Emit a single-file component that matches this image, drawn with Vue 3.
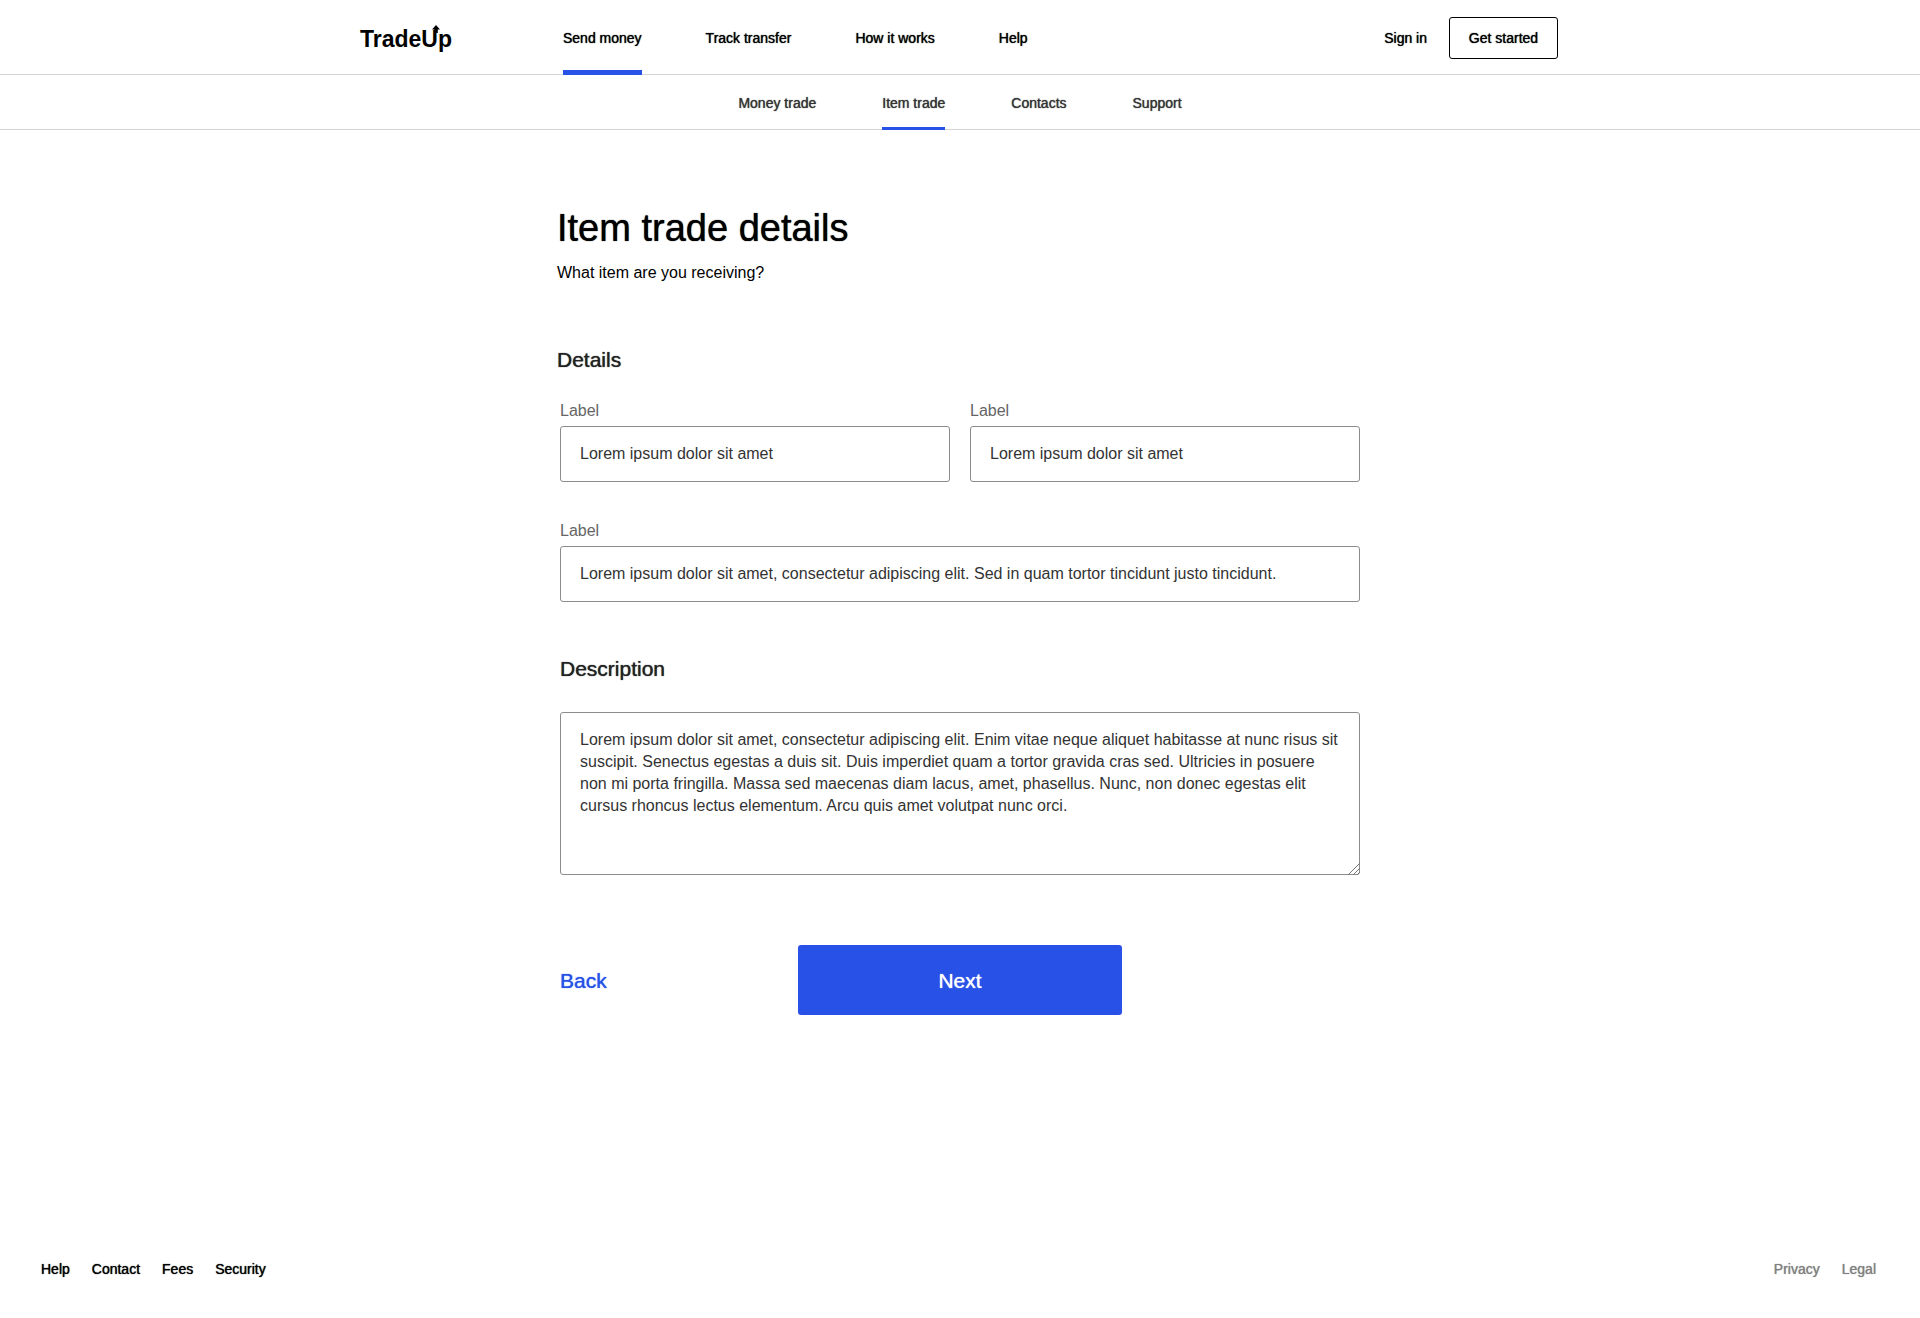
<script setup>
import { ref } from 'vue'

const mainLinks = ['Send money', 'Track transfer', 'How it works', 'Help']
const tradeLinks = ['Money trade', 'Item trade', 'Contacts', 'Support']
const footerLinks = ['Help', 'Contact', 'Fees', 'Security']
const legalLinks = ['Privacy', 'Legal']

const activeMain = ref('Send money')
const activeTrade = ref('Item trade')

const first = ref('Lorem ipsum dolor sit amet')
const second = ref('Lorem ipsum dolor sit amet')
const third = ref(
  'Lorem ipsum dolor sit amet, consectetur adipiscing elit. Sed in quam tortor tincidunt justo tincidunt.'
)
const description = ref(
  'Lorem ipsum dolor sit amet, consectetur adipiscing elit. Enim vitae neque aliquet habitasse at nunc risus sit suscipit. Senectus egestas a duis sit. Duis imperdiet quam a tortor gravida cras sed. Ultricies in posuere non mi porta fringilla. Massa sed maecenas diam lacus, amet, phasellus. Nunc, non donec egestas elit cursus rhoncus lectus elementum. Arcu quis amet volutpat nunc orci.'
)
</script>

<template>
  <div class="page">
    <header class="header">
      <div class="header-inner">
        <a class="logo" href="#">
          TradeUp
          <svg class="logo-arrow" width="8" height="8" viewBox="0 0 8 8" aria-hidden="true">
            <path d="M4 0 8 4.6H5.8V8H2.2V4.6H0Z" />
          </svg>
        </a>
        <nav class="main-nav" aria-label="Main">
          <a
            v-for="link in mainLinks"
            :key="link"
            href="#"
            class="medium"
            :class="{ active: link === activeMain }"
            @click.prevent="activeMain = link"
          >{{ link }}</a>
        </nav>
        <div class="account">
          <a class="medium" href="#">Sign in</a>
          <button class="get-started medium" type="button">Get started</button>
        </div>
      </div>
    </header>

    <nav class="sub-nav" aria-label="Trade">
      <a
        v-for="link in tradeLinks"
        :key="link"
        href="#"
        class="medium"
        :class="{ active: link === activeTrade }"
        @click.prevent="activeTrade = link"
      >{{ link }}</a>
    </nav>

    <main class="content">
      <h1 class="medium">Item trade details</h1>
      <p class="intro">What item are you receiving?</p>
      <h2 class="medium">Details</h2>

      <form class="form" @submit.prevent>
        <div class="fields">
          <div class="field">
            <label for="detail-1">Label</label>
            <input id="detail-1" v-model="first" type="text" />
          </div>
          <div class="field">
            <label for="detail-2">Label</label>
            <input id="detail-2" v-model="second" type="text" />
          </div>
          <div class="field wide">
            <label for="detail-3">Label</label>
            <input id="detail-3" v-model="third" type="text" />
          </div>
        </div>

        <h2><label class="medium" for="description">Description</label></h2>
        <div class="text-area">
          <textarea id="description" v-model="description" spellcheck="false"></textarea>
          <svg class="grip" width="12" height="12" viewBox="0 0 12 12" aria-hidden="true">
            <path d="M0 12 12 0M5 12 12 5M9 12 12 9" />
          </svg>
        </div>

        <div class="actions">
          <a class="back medium" href="#">Back</a>
          <button class="next medium" type="submit">Next</button>
        </div>
      </form>
    </main>

    <footer class="footer">
      <nav class="footer-nav" aria-label="Footer">
        <a v-for="link in footerLinks" :key="link" class="medium" href="#">{{ link }}</a>
      </nav>
      <nav class="footer-nav legal" aria-label="Legal">
        <a v-for="link in legalLinks" :key="link" class="medium" href="#">{{ link }}</a>
      </nav>
    </footer>
  </div>
</template>

<style>
body {
  margin: 0;
  background: #fff;
}
</style>

<style scoped>
.page {
  --blue: #2751e7;
  --line: #d4d4d4;
  display: flex;
  flex-direction: column;
  box-sizing: border-box;
  min-height: 100vh;
  color: #000;
  font: 14px/20px "Liberation Sans", Arial, sans-serif;
}

.page *,
.page *::after {
  box-sizing: border-box;
}

a {
  color: inherit;
  text-decoration: none;
}

button,
input,
textarea {
  margin: 0;
  font-family: inherit;
}

/* Weight between regular and bold */
.medium {
  font-weight: 400;
  text-shadow: 0 0 1px currentColor;
}

.header {
  border-bottom: 1px solid var(--line);
}

.header-inner {
  display: flex;
  align-items: center;
  max-width: 1200px;
  height: 74px;
  margin: 0 auto;
  padding: 2px 2px 0 0;
}

.logo {
  position: relative;
  width: 203px;
  padding-top: 2px;
  font-size: 23px;
  line-height: 28px;
  font-weight: 700;
}

.logo-arrow {
  position: absolute;
  top: 2px;
  left: 72px;
}

.main-nav {
  display: flex;
  align-self: stretch;
  gap: 64px;
}

.main-nav a,
.sub-nav a {
  position: relative;
  display: flex;
  align-items: center;
}

.main-nav .active::after,
.sub-nav .active::after {
  content: "";
  position: absolute;
  right: 0;
  bottom: -1px;
  left: 0;
  height: 5px;
  background: var(--blue);
}

.account {
  display: flex;
  align-items: center;
  gap: 22px;
  margin-left: auto;
}

.get-started {
  width: 109px;
  height: 42px;
  padding: 0;
  border: 1px solid #000;
  border-radius: 3px;
  background: #fff;
  color: inherit;
  font-size: 14px;
}

.sub-nav {
  display: flex;
  justify-content: center;
  gap: 66px;
  height: 55px;
  padding-top: 2px;
  border-bottom: 1px solid var(--line);
  color: #333;
}

.sub-nav .active::after {
  height: 3px;
}

.content {
  width: 100%;
  max-width: 806px;
  margin: 0 auto;
  padding-top: 76px;
}

h1,
h2,
p {
  margin: 0;
}

h1 {
  font-size: 38px;
  line-height: 44px;
}

.intro {
  margin-top: 12px;
  font-size: 16px;
  line-height: 22px;
}

h2 {
  margin-top: 62px;
  color: #222;
  font-size: 21px;
  line-height: 28px;
  font-weight: 400;
}

.form {
  padding: 0 3px;
}

.fields {
  display: grid;
  grid-template-columns: 1fr 1fr;
  gap: 38px 20px;
  margin-top: 26px;
}

.field {
  display: flex;
  flex-direction: column;
  gap: 4px;
}

.wide {
  grid-column: 1 / -1;
}

.field label {
  color: #666;
  font-size: 16px;
  line-height: 22px;
}

input,
textarea {
  display: block;
  width: 100%;
  border: 1px solid #8c8c8c;
  border-radius: 3px;
  background: #fff;
  color: #333;
  font-size: 16px;
  line-height: 22px;
  outline: 0;
}

input {
  height: 56px;
  padding: 0 19px;
}

.form h2 {
  margin-top: 53px;
}

.text-area {
  position: relative;
  margin-top: 29px;
}

textarea {
  height: 163px;
  padding: 16px 19px;
  resize: none;
  overflow: hidden;
}

.grip {
  position: absolute;
  right: 0;
  bottom: 0;
  fill: none;
  stroke: #777;
}

.actions {
  display: grid;
  grid-template-columns: 1fr 324px 1fr;
  align-items: center;
  margin-top: 70px;
  font-size: 21px;
  line-height: 28px;
}

.back {
  justify-self: start;
  padding-top: 2px;
  color: var(--blue);
}

.next {
  height: 70px;
  padding: 2px 0 0;
  border: 0;
  border-radius: 3px;
  background: var(--blue);
  color: #fff;
  font-size: 21px;
}

.footer {
  display: flex;
  justify-content: space-between;
  margin-top: auto;
  padding: 40px 44px 39px 41px;
}

.footer-nav {
  display: flex;
  gap: 22px;
}

.legal {
  color: #808080;
}
</style>
